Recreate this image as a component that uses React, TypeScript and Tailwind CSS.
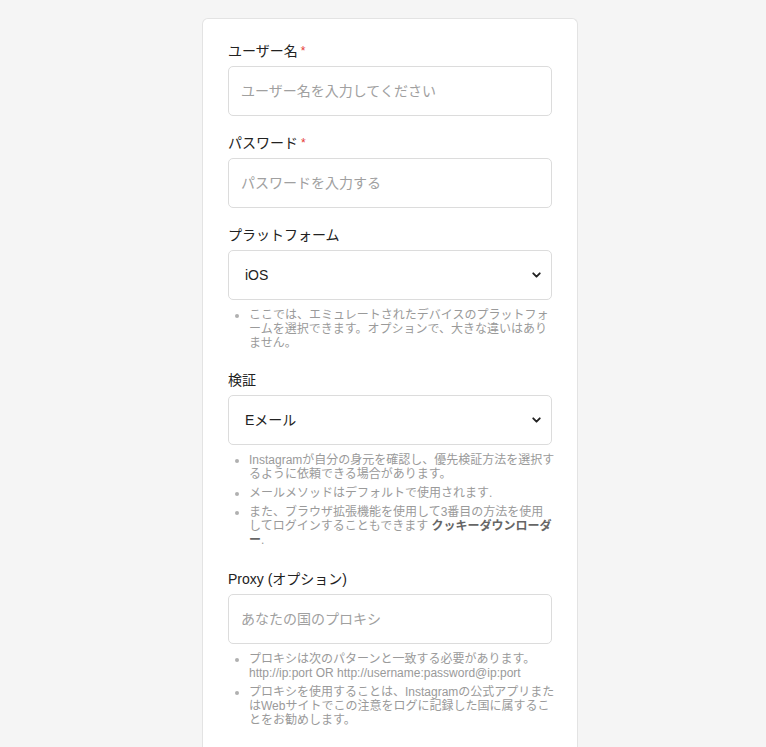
import { ChevronDown } from "lucide-react";

const font = "font-['Liberation_Sans','Noto_Sans_CJK_JP',sans-serif]";

function Label({ text, required }: { text: string; required?: boolean }) {
  return (
    <label className="block text-[14px] leading-[20px] text-[#222] mb-[5px]">
      {text}
      {required && <span className="text-[#e53935] text-[12px] ml-[3px] align-top">*</span>}
    </label>
  );
}

function TextInput({ placeholder, type = "text" }: { placeholder: string; type?: string }) {
  return (
    <input
      type={type}
      placeholder={placeholder}
      className={`${font} block w-full h-[50px] rounded-[5px] border border-[#dcdcdc] bg-white px-[12px] text-[14px] text-[#222] placeholder:text-[#a0a0a0] outline-none`}
    />
  );
}

function Select({ options }: { options: string[] }) {
  return (
    <div className="relative">
      <select
        className={`${font} block w-full h-[50px] appearance-none rounded-[5px] border border-[#dcdcdc] bg-white pl-[16px] pr-[30px] text-[14px] text-[#222] outline-none`}
      >
        {options.map((o) => (
          <option key={o}>{o}</option>
        ))}
      </select>
      <ChevronDown
        className="pointer-events-none absolute right-[9px] top-1/2 -translate-y-1/2 text-[#222]"
        size={13}
        strokeWidth={3.5}
      />
    </div>
  );
}

function Hints({ children }: { children: React.ReactNode }) {
  return (
    <ul className="mt-[8px] -mr-[4px] pl-[21px] list-disc marker:text-[#b0b0b0] text-[12px] leading-[14px] text-[#9a9a9a] space-y-[5px]">
      {children}
    </ul>
  );
}

export default function App() {
  return (
    <div className={`${font} min-h-[747px] bg-[#f5f5f5] pt-[18px]`}>
      <div className="ml-[202px] w-[376px] rounded-t-[6px] border border-b-0 border-[#e3e3e3] bg-white px-[25px] pt-[22px] pb-[60px]">
        <div>
          <Label text="ユーザー名" required />
          <TextInput placeholder="ユーザー名を入力してください" />
        </div>

        <div className="mt-[17px]">
          <Label text="パスワード" required />
          <TextInput placeholder="パスワードを入力する" type="password" />
        </div>

        <div className="mt-[17px]">
          <Label text="プラットフォーム" />
          <Select options={["iOS", "Android"]} />
          <Hints>
            <li>ここでは、エミュレートされたデバイスのプラットフォームを選択できます。オプションで、大きな違いはありません。</li>
          </Hints>
        </div>

        <div className="mt-[20px]">
          <Label text="検証" />
          <Select options={["Eメール", "SMS"]} />
          <Hints>
            <li>Instagramが自分の身元を確認し、優先検証方法を選択するように依頼できる場合があります。</li>
            <li>メールメソッドはデフォルトで使用されます.</li>
            <li className="mr-[4px]">
              また、ブラウザ拡張機能を使用して3番目の方法を使用してログインすることもできます{" "}
              <b className="text-[#666]">クッキーダウンローダー</b>.
            </li>
          </Hints>
        </div>

        <div className="mt-[22px]">
          <Label text="Proxy (オプション)" />
          <TextInput placeholder="あなたの国のプロキシ" />
          <Hints>
            <li>
              プロキシは次のパターンと一致する必要があります。
              <br />
              http://ip:port OR http://username:password@ip:port
            </li>
            <li>プロキシを使用することは、Instagramの公式アプリまたはWebサイトでこの注意をログに記録した国に属することをお勧めします。</li>
          </Hints>
        </div>
      </div>
    </div>
  );
}
